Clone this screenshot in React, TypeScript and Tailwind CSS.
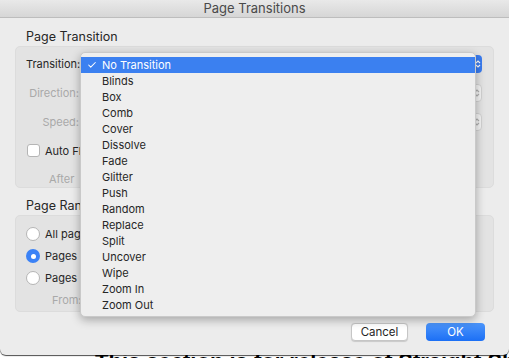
import { Check } from "lucide-react";

const ITEMS = [
  "Blinds",
  "Box",
  "Comb",
  "Cover",
  "Dissolve",
  "Fade",
  "Glitter",
  "Push",
  "Random",
  "Replace",
  "Split",
  "Uncover",
  "Wipe",
  "Zoom In",
  "Zoom Out",
];

function PopupEnd({ blue }: { blue?: boolean }) {
  return (
    <div
      className={`flex h-[18px] w-[20px] items-center justify-end rounded-[4px] pr-[1px] ${
        blue ? "bg-[#3a7cf0]" : "border border-[#d2d2d2] bg-[#f3f3f3]"
      }`}
    >
      <svg width="6" height="10" viewBox="0 0 6 10" fill="none">
        <path d="M1 4 L3 2 L5 4 M1 6 L3 8 L5 6" stroke={blue ? "#ffffff" : "#b0b0b0"} strokeWidth="1.1" />
      </svg>
    </div>
  );
}

export default function App() {
  return (
    <div
      className="relative h-[358px] w-[509px] overflow-hidden bg-white text-[11px] text-[#262626]"
      style={{ fontFamily: "Inter, 'Liberation Sans', sans-serif" }}
    >
      <div className="relative z-10 flex h-[355px] flex-col rounded-b-[6px] bg-[#ececec] shadow-[0_1px_1px_rgba(0,0,0,0.7)]">
        {/* title bar */}
        <div className="flex h-[18px] items-center justify-center border-b border-[#bdbdbd] bg-gradient-to-b from-[#e9e9e9] to-[#d6d6d6] text-[13px] text-[#4a4a4a]">
          Page Transitions
        </div>

        <div className="px-[15px] pt-[11px]">
          <div className="pl-[11px] text-[12.5px] leading-[16px]">Page Transition</div>
          <div className="mt-[1px] flex h-[142px] flex-col rounded-[5px] border border-[#dcdcdc] bg-[#e3e3e3] pl-[10px] pr-[11px]">
            <div className="mt-[8px] flex h-[18px] items-center justify-between">
              <span>Transition:</span>
              <PopupEnd blue />
            </div>
            <div className="mt-[11px] flex h-[18px] items-center justify-between text-[#a9a9a9]">
              <span className="w-[53px] text-right">Direction:</span>
              <PopupEnd />
            </div>
            <div className="mt-[11px] flex h-[18px] items-center justify-between text-[#a9a9a9]">
              <span className="w-[53px] text-right">Speed:</span>
              <PopupEnd />
            </div>
            <div className="mt-[11px] flex h-[18px] items-center gap-[5px] pl-[1px]">
              <div className="h-[13px] w-[13px] rounded-[3px] border border-[#b5b5b5] bg-white" />
              <span>Auto Fl</span>
            </div>
            <div className="mt-[11px] pl-[23px] text-[#a9a9a9]">After</div>
          </div>

          <div className="mt-[10px] pl-[11px] text-[12.5px] leading-[16px]">Page Range</div>
          <div className="mt-[1px] flex h-[97px] flex-col gap-[6px] rounded-[5px] border border-[#dcdcdc] bg-[#e3e3e3] pl-[10px] pt-[10px]">
            <div className="flex h-[16px] items-center gap-[5px]">
              <div className="h-[14px] w-[14px] rounded-full border border-[#b5b5b5] bg-white" />
              <span>All pag</span>
            </div>
            <div className="flex h-[16px] items-center gap-[5px]">
              <div className="flex h-[14px] w-[14px] items-center justify-center rounded-full bg-[#3b82f6]">
                <div className="h-[5px] w-[5px] rounded-full bg-white" />
              </div>
              <span>Pages</span>
            </div>
            <div className="flex h-[16px] items-center gap-[5px]">
              <div className="h-[14px] w-[14px] rounded-full border border-[#b5b5b5] bg-white" />
              <span>Pages</span>
            </div>
            <div className="pl-[26px] text-[#a9a9a9]">From:</div>
          </div>

          <div className="mt-[11px] flex justify-end gap-[18px] pr-[9px]">
            <button className="h-[18px] w-[57px] rounded-[4px] border border-[#c6c6c6] bg-white text-[11.5px] leading-[16px] text-[#262626] shadow-[0_0.5px_1px_rgba(0,0,0,0.15)]">
              Cancel
            </button>
            <button className="h-[18px] w-[59px] rounded-[4px] bg-gradient-to-b from-[#4b95fb] to-[#1b6ff5] text-[11.5px] leading-[16px] text-white">
              OK
            </button>
          </div>
        </div>
      </div>

      {/* document text behind the sheet */}
      <div
        className="absolute left-[95px] top-[351px] whitespace-nowrap text-[22px] font-bold leading-none text-black"
        style={{ fontFamily: "'Liberation Sans', sans-serif" }}
      >
        This section is for release of Straight Shoot
      </div>

      {/* popup menu */}
      <div className="absolute left-[80px] top-[52px] z-20 w-[396px] rounded-[5px] border border-[#c9c9c9] bg-[#eeeeee] pb-[3px] pt-[4px] shadow-[0_3px_10px_rgba(0,0,0,0.3)]">
        <div className="flex h-[16px] items-center bg-[#3b80f0] text-white">
          <Check className="ml-[6px] mr-[5px] h-[10px] w-[10px]" strokeWidth={2.5} />
          <span>No Transition</span>
        </div>
        {ITEMS.map((item) => (
          <div key={item} className="flex h-[16px] items-center pl-[21px] text-[#262626]">
            {item}
          </div>
        ))}
      </div>
    </div>
  );
}
